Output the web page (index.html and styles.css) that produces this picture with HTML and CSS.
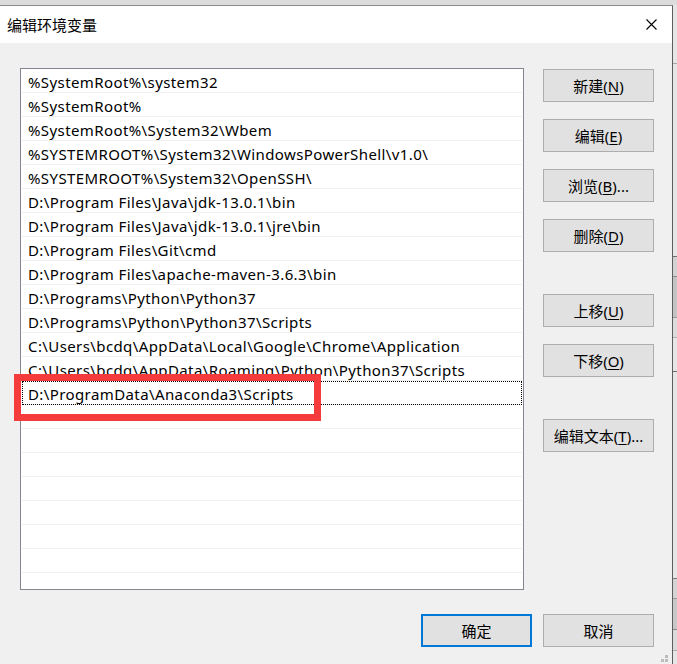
FILE: index.html
```html
<!DOCTYPE html>
<html lang="zh-CN">
<head>
<meta charset="utf-8">
<title>编辑环境变量</title>
<link rel="stylesheet" href="styles.css">
</head>
<body>
<div class="screen">
  <div class="window">
    <div class="titlebar">
      <span class="title">编辑环境变量</span>
      <svg class="close" width="11" height="11" viewBox="0 0 11 11"><path d="M0.5 0.5 L10.5 10.5 M10.5 0.5 L0.5 10.5" stroke="#000" stroke-width="1.1" fill="none"/></svg>
    </div>
    <div class="content">
      <div class="main">
        <div class="list">
          <div class="row">%SystemRoot%\system32</div>
          <div class="row">%SystemRoot%</div>
          <div class="row">%SystemRoot%\System32\Wbem</div>
          <div class="row">%SYSTEMROOT%\System32\WindowsPowerShell\v1.0\</div>
          <div class="row">%SYSTEMROOT%\System32\OpenSSH\</div>
          <div class="row">D:\Program Files\Java\jdk-13.0.1\bin</div>
          <div class="row">D:\Program Files\Java\jdk-13.0.1\jre\bin</div>
          <div class="row">D:\Program Files\Git\cmd</div>
          <div class="row">D:\Program Files\apache-maven-3.6.3\bin</div>
          <div class="row">D:\Programs\Python\Python37</div>
          <div class="row">D:\Programs\Python\Python37\Scripts</div>
          <div class="row">C:\Users\bcdq\AppData\Local\Google\Chrome\Application</div>
          <div class="row">C:\Users\bcdq\AppData\Roaming\Python\Python37\Scripts</div>
          <div class="row focus">D:\ProgramData\Anaconda3\Scripts</div>
          <div class="row"></div>
          <div class="row"></div>
          <div class="row"></div>
          <div class="row"></div>
          <div class="row"></div>
          <div class="row"></div>
          <div class="row"></div>
          <div class="row"></div>
        </div>
        <div class="side">
          <div class="group">
            <button class="btn">新建(<u>N</u>)</button>
            <button class="btn">编辑(<u>E</u>)</button>
            <button class="btn">浏览(<u>B</u>)...</button>
            <button class="btn">删除(<u>D</u>)</button>
          </div>
          <div class="group">
            <button class="btn">上移(<u>U</u>)</button>
            <button class="btn">下移(<u>O</u>)</button>
          </div>
          <div class="group">
            <button class="btn">编辑文本(<u>T</u>)...</button>
          </div>
        </div>
      </div>
      <div class="footer">
        <button class="btn default">确定</button>
        <button class="btn">取消</button>
      </div>
    </div>
    <svg class="grip" width="8" height="7" viewBox="0 0 8 7"><rect x="4" y="0" width="3" height="3" fill="#bcbcbc"/><rect x="0" y="4" width="3" height="3" fill="#bcbcbc"/><rect x="4" y="4" width="3" height="3" fill="#bcbcbc"/></svg>
  </div>
  <div class="edge"></div>
</div>
<div class="highlight"></div>
</body>
</html>
```
FILE: styles.css
```css
* { box-sizing: border-box; }
html, body { margin: 0; padding: 0; }
body {
  width: 677px;
  height: 664px;
  overflow: hidden;
  background: #dcdcdc;
  font-family: "Noto Sans", "Noto Sans CJK SC", sans-serif;
  font-size: 15px;
  color: #000;
  position: relative;
}
.screen {
  display: flex;
  padding-top: 5px;
  height: 664px;
}
.window {
  position: relative;
  width: 673px;
  flex: none;
  background: #f0f0f0;
  border-top: 1px solid #8a8a8a;
  border-right: 1px solid #5e5e5e;
  display: flex;
  flex-direction: column;
}
.titlebar {
  height: 37px;
  background: #fff;
  display: flex;
  align-items: center;
  justify-content: space-between;
  padding: 0 15px 0 7px;
}
.title {
  font-family: "Noto Sans CJK SC", sans-serif;
  font-size: 15px;
  line-height: 20px;
}
.close { display: block; }
.content {
  padding: 25px 18px 0 20px;
}
.main {
  display: flex;
  gap: 19px;
}
.list {
  width: 504px;
  height: 522px;
  background: #fff;
  border: 1px solid #828790;
  padding: 0 1px;
  overflow: hidden;
}
.row {
  height: 24px;
  border-bottom: 1px solid #f0f0f0;
  padding: 2px 0 0 6px;
  line-height: 23px;
  letter-spacing: 0.4px;
  white-space: nowrap;
  overflow: visible;
}
.row.focus {
  outline: 1px dotted #000;
  outline-offset: -1px;
}
.side {
  width: 111px;
  padding-top: 1px;
  display: flex;
  flex-direction: column;
  gap: 42px;
}
.group {
  display: flex;
  flex-direction: column;
  gap: 17px;
}
.btn {
  width: 111px;
  height: 33px;
  margin: 0;
  padding: 0;
  background: #e1e1e1;
  border: 1px solid #adadad;
  font-family: "Noto Sans", "Noto Sans CJK SC", sans-serif;
  font-size: 15px;
  color: #000;
  line-height: 20px;
}
.btn u { text-underline-offset: 2px; text-decoration-thickness: 1px; }
.btn.default {
  border: 2px solid #0078d7;
}
.footer {
  display: flex;
  justify-content: flex-end;
  gap: 11px;
  margin-top: 24px;
}
.grip {
  position: absolute;
  right: 3px;
  bottom: 2px;
}
.edge {
  flex: 1;
  background-color: #e6e6e6;
  background-image: linear-gradient(to bottom,
    transparent 58px, #a8a8a8 58px, #a8a8a8 59px, transparent 59px,
    transparent 251px, #6e6e6e 251px, #6e6e6e 252px, #d2d2d2 252px,
    #d2d2d2 271px, #8a8a8a 271px, #8a8a8a 272px, #c4c4c4 272px,
    #c4c4c4 312px, #9a9a9a 312px, #9a9a9a 313px, #dcdcdc 313px,
    #dcdcdc 332px, #b0b0b0 332px, #b0b0b0 333px, transparent 333px,
    transparent 366px, #6e6e6e 366px, #6e6e6e 367px, transparent 367px,
    transparent 573px, #7a7a7a 573px, #7a7a7a 574px, #d4d4d4 574px,
    #d4d4d4 593px, #9a9a9a 593px, #9a9a9a 594px, #c8c8c8 594px,
    #c8c8c8 624px, #8a8a8a 624px, #8a8a8a 625px, #dadada 625px,
    #dadada 645px, #b0b0b0 645px, #b0b0b0 646px, transparent 646px);
}
.highlight {
  position: absolute;
  left: 14px;
  top: 374px;
  width: 307px;
  height: 47px;
  border: 7px solid #f53b3b;
}
```
